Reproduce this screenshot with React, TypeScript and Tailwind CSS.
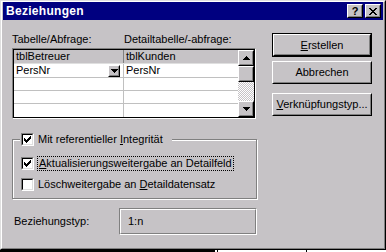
import type { ReactNode } from 'react';

const FACE = 'bg-[#c6c3c6]';

function Raised({ children, className = '' }: { children?: ReactNode; className?: string }) {
  return (
    <div className={`border border-t-white border-l-white border-r-black border-b-black ${className}`}>
      <div className={`h-full w-full ${FACE} border border-t-[#c6c3c6] border-l-[#c6c3c6] border-r-[#808080] border-b-[#808080] flex items-center justify-center`}>
        {children}
      </div>
    </div>
  );
}

function Arrow({ up = false }: { up?: boolean }) {
  return (
    <svg width="7" height="4" viewBox="0 0 7 4" shapeRendering="crispEdges" className={up ? 'rotate-180' : ''}>
      <path d="M0 0h7v1h-7z M1 1h5v1h-5z M2 2h3v1h-3z M3 3h1v1h-1z" fill="#000" />
    </svg>
  );
}

function CheckBox({ checked }: { checked: boolean }) {
  return (
    <span className="block w-[13px] h-[13px] shrink-0 border border-t-[#808080] border-l-[#808080] border-r-white border-b-white">
      <span className="w-full h-full bg-white border border-t-black border-l-black border-r-[#dfdfdf] border-b-[#dfdfdf] flex items-center justify-center">
        {checked && (
          <svg width="7" height="7" viewBox="0 0 7 7" shapeRendering="crispEdges">
            <path
              d="M6 0h1v1h-1z M5 1h2v1h-2z M0 2h1v1h-1z M4 2h3v1h-3z M0 3h2v1h-2z M3 3h3v1h-3z M0 4h5v1h-5z M1 5h3v1h-3z M2 6h1v1h-1z"
              fill="#000"
            />
          </svg>
        )}
      </span>
    </span>
  );
}

const rows = [
  ['PersNr', 'PersNr'],
  ['', ''],
  ['', ''],
  ['', ''],
];

export default function App() {
  return (
    <div className="w-[386px] h-[252px] bg-white overflow-hidden font-['Liberation_Sans',Arial,sans-serif] text-[11px] leading-[13px] text-black">
      {/* Fensterrahmen */}
      <div className="h-[250px] border border-t-[#dfdfdf] border-l-[#dfdfdf] border-r-black border-b-black">
        <div className={`h-full ${FACE} border border-t-white border-l-white border-r-[#808080] border-b-[#808080] flex flex-col`}>
          {/* Titelleiste */}
          <div className="h-[18px] mx-[1px] mt-[0px] bg-[#000080] flex items-center justify-between pl-[3px] pr-[2px]">
            <span className="text-white font-bold text-[12px] tracking-[0.3px]">Beziehungen</span>
            <div className="flex gap-[2px]">
              <Raised className="w-[16px] h-[14px]">
                <span className="font-bold text-[11px] leading-[10px]">?</span>
              </Raised>
              <Raised className="w-[16px] h-[14px]">
                <svg width="8" height="7" viewBox="0 0 8 7" shapeRendering="crispEdges">
                  <path
                    d="M0 0h2v1h-2z M6 0h2v1h-2z M1 1h2v1h-2z M5 1h2v1h-2z M2 2h4v1h-4z M3 3h2v1h-2z M2 4h4v1h-4z M1 5h2v1h-2z M5 5h2v1h-2z M0 6h2v1h-2z M6 6h2v1h-2z"
                    fill="#000"
                  />
                </svg>
              </Raised>
            </div>
          </div>

          <div className="flex-1 flex pl-[10px]">
            {/* linke Spalte */}
            <div className="w-[245px] flex flex-col">
              <div className="flex mt-[13px]">
                <span className="w-[112px]">Tabelle/Abfrage:</span>
                <span>Detailtabelle/-abfrage:</span>
              </div>

              {/* Tabelle */}
              <div className="mt-[2px] h-[71px] w-[244px] border border-t-[#808080] border-l-[#808080] border-r-white border-b-white">
                <div className="h-full w-full border border-black flex bg-white">
                  <div className="flex-1 flex flex-col">
                    <div className={`h-[14px] flex ${FACE} border-b border-[#dfdfdf]`}>
                      <div className="w-[110px] pl-[2px] border-r border-[#808080]">tblBetreuer</div>
                      <div className="flex-1 pl-[2px]">tblKunden</div>
                    </div>
                    {rows.map((r, i) => (
                      <div key={i} className="h-[14px] flex border-b border-[#c0c0c0] last:border-b-0">
                        <div className="w-[110px] pl-[2px] border-r border-[#c0c0c0] flex items-center justify-between pr-[3px]">
                          <span>{r[0]}</span>
                          {i === 0 && (
                            <Raised className="w-[12px] h-[12px]">
                              <Arrow />
                            </Raised>
                          )}
                        </div>
                        <div className="flex-1 pl-[2px]">{r[1]}</div>
                      </div>
                    ))}
                  </div>
                  {/* Scrollleiste */}
                  <div className="w-[16px] flex flex-col">
                    <Raised className="h-[16px]">
                      <Arrow up />
                    </Raised>
                    <Raised className="h-[16px]" />
                    <div className="flex-1 bg-[repeating-conic-gradient(#c6c3c6_0_25%,#ffffff_0_50%)] bg-[length:2px_2px]" />
                    <Raised className="h-[16px]">
                      <Arrow />
                    </Raised>
                  </div>
                </div>
              </div>

              {/* Gruppenfeld */}
              <fieldset className="mt-[14px] w-[245px] h-[66px] border border-[#808080] shadow-[inset_1px_1px_0_#fff,1px_1px_0_#fff]">
                <legend className={`ml-[7px] pl-[1px] pr-[9px] ${FACE}`}>
                  <span className="flex items-center gap-[4px]">
                    <CheckBox checked />
                    <span>
                      Mit referentieller <span className="underline">I</span>ntegrität
                    </span>
                  </span>
                </legend>
                <div className="pl-[8px] flex flex-col gap-[7px] mt-[10px]">
                  <div className="flex items-center gap-[3px]">
                    <CheckBox checked />
                    <span className="border border-dotted border-black px-[1px] leading-[13px]">
                      <span className="underline">A</span>ktualisierungsweitergabe an Detailfeld
                    </span>
                  </div>
                  <div className="flex items-center gap-[4px]">
                    <CheckBox checked={false} />
                    <span>
                      Löschweitergabe an <span className="underline">D</span>etaildatensatz
                    </span>
                  </div>
                </div>
              </fieldset>

              <div className="mt-[9px] flex items-center">
                <span className="w-[107px] pl-[2px]">Beziehungstyp:</span>
                <div className="w-[138px] h-[27px] border border-t-[#808080] border-l-[#808080] border-r-white border-b-white">
                  <div className="h-full border border-t-white border-l-white border-r-[#808080] border-b-[#808080] flex items-center pl-[7px]">
                    1:n
                  </div>
                </div>
              </div>
            </div>

            {/* rechte Spalte */}
            <div className="ml-[15px] w-[100px] flex flex-col">
              <div className="mt-[13px] h-[24px] border border-black">
                <Raised className="h-full">
                  <span>
                    <span className="underline">E</span>rstellen
                  </span>
                </Raised>
              </div>
              <Raised className="mt-[4px] h-[23px]">Abbrechen</Raised>
              <Raised className="mt-[9px] h-[23px]">
                <span>
                  <span className="underline">V</span>erknüpfungstyp...
                </span>
              </Raised>
            </div>
          </div>
        </div>
      </div>
      {/* Rest des darunterliegenden Fensters */}
      <div className="h-[2px] flex">
        <div className="w-[215px] bg-black" />
        <div className="w-[2px]" />
        <div className="w-[1px] bg-black" />
        <div className="w-[88px]" />
        <div className="w-[1px] bg-black" />
      </div>
    </div>
  );
}
